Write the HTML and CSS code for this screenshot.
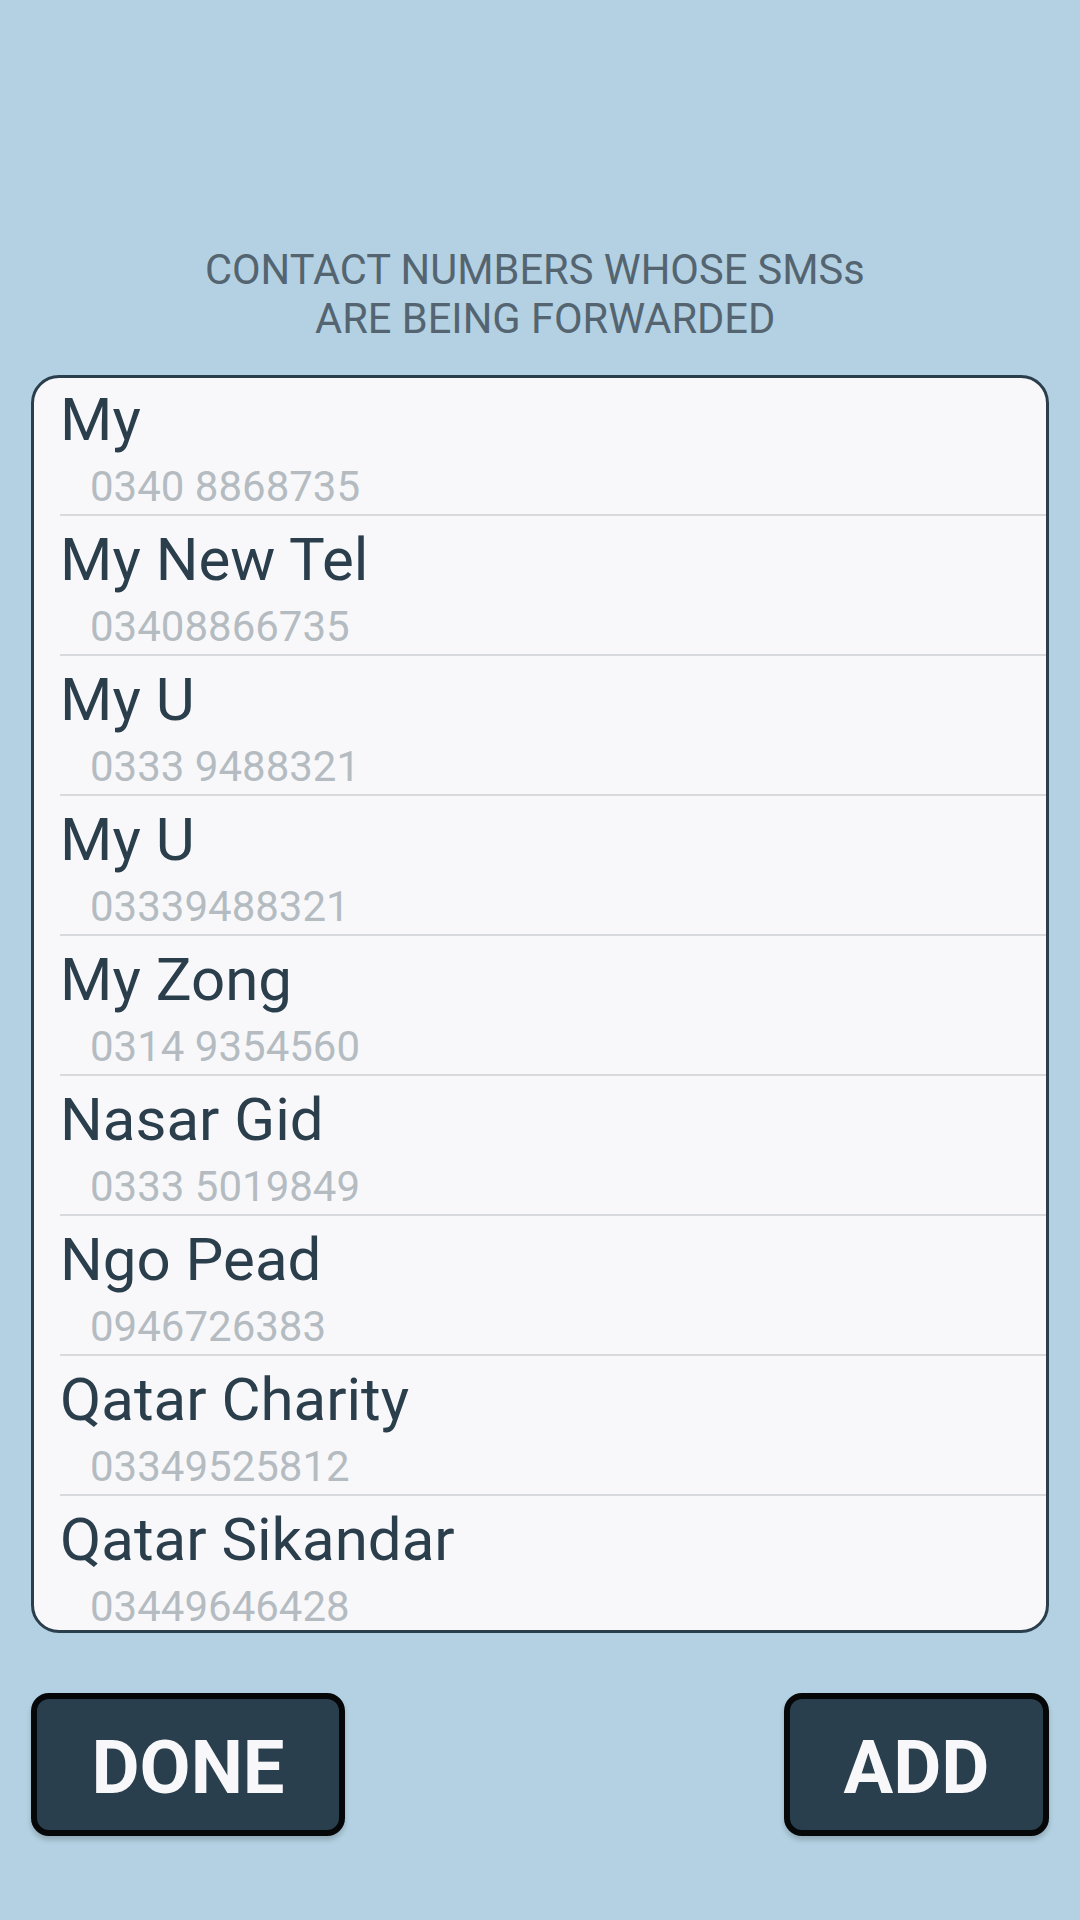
FILE: index.html
```html
<!DOCTYPE html>
<html lang="en">
  <head>
    <meta charset="UTF-8" />
    <meta name="viewport" content="width=device-width, initial-scale=1.0" />
    <title>Forwarded Contacts</title>
    <link rel="stylesheet" href="styles.css">
  </head>
  <body>
    <main class="screen">
      <h1 class="title">
        CONTACT NUMBERS WHOSE SMSs&nbsp;<br />&nbsp;ARE BEING FORWARDED
      </h1>
      <section class="contacts">
        <ul class="contact-list">
          <li class="contact">
            <p class="name">My</p>
            <p class="number">0340 8868735</p>
          </li>
          <li class="contact">
            <p class="name">My New Tel</p>
            <p class="number">03408866735</p>
          </li>
          <li class="contact">
            <p class="name">My U</p>
            <p class="number">0333 9488321</p>
          </li>
          <li class="contact">
            <p class="name">My U</p>
            <p class="number">03339488321</p>
          </li>
          <li class="contact">
            <p class="name">My Zong</p>
            <p class="number">0314 9354560</p>
          </li>
          <li class="contact">
            <p class="name">Nasar Gid</p>
            <p class="number">0333 5019849</p>
          </li>
          <li class="contact">
            <p class="name">Ngo Pead</p>
            <p class="number">0946726383</p>
          </li>
          <li class="contact">
            <p class="name">Qatar Charity</p>
            <p class="number">03349525812</p>
          </li>
          <li class="contact">
            <p class="name">Qatar Sikandar</p>
            <p class="number">03449646428</p>
          </li>
        </ul>
      </section>
      <div class="actions">
        <button class="btn btn-done">DONE</button>
        <button class="btn btn-add">ADD</button>
      </div>
    </main>
  </body>
</html>
```

FILE: styles.css
```css
/* Global Layout Set-up */
* {
  box-sizing: border-box;
}

body {
  margin: 0;
  font-family: Roboto, "Liberation Sans", sans-serif;
  background: #b3d1e2;
  color: #2a3e4c;
}

.screen {
  width: 1080px;
  height: 1920px;
  padding: 245px 31px 0 31px;
}

.title {
  margin: 0;
  text-align: center;
  font-size: 41.6px;
  line-height: 49px;
  font-weight: 400;
  color: #546470;
}

/* Contact list card */

.contacts {
  margin-top: 32px;
  height: 1258px;
  background: #f8f8fb;
  border: 3px solid #2a3e4c;
  border-radius: 28px;
  overflow: hidden;
}

.contact-list {
  list-style: none;
  margin: -2px 0 0;
  padding: 0 0 0 26px;
}

.contact {
  height: 140px;
  padding: 14px 0 5px;
  border-bottom: 2px solid #d8d9dc;
}

.name {
  margin: 0;
  font-size: 60px;
  line-height: 60px;
  color: #2a3e4c;
}

.number {
  margin: 15px 0 0;
  padding-left: 30px;
  font-size: 42px;
  line-height: 44px;
  color: #b5bcc1;
}

/* Buttons */

.actions {
  display: flex;
  justify-content: space-between;
  margin-top: 60px;
}

.btn {
  height: 143px;
  display: flex;
  align-items: center;
  justify-content: center;
  padding: 6px 0 0;
  font-family: inherit;
  font-size: 74px;
  font-weight: 700;
  color: #f8f8fa;
  background: #2a3f4d;
  border: 6px solid #050708;
  border-radius: 18px;
  box-shadow: 0 4px 5px rgba(0, 0, 0, 0.18);
}

.btn-done {
  width: 314px;
}

.btn-add {
  width: 265px;
}
```
